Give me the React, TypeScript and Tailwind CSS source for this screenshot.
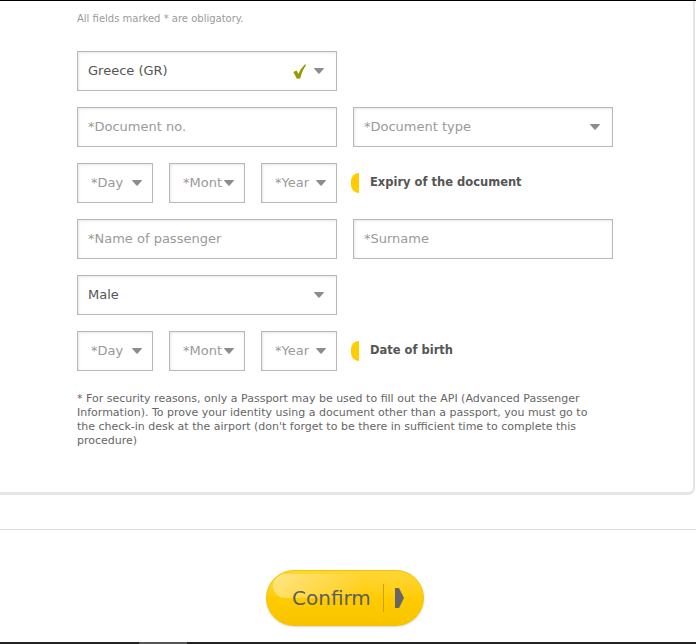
import React from 'react'

const font = { fontFamily: '"DejaVu Sans", Verdana, sans-serif' }

function Caret() {
  return (
    <svg width="10" height="6" viewBox="0 0 10 6" className="shrink-0">
      <path d="M0 0.5 Q0 0 0.8 0 L9.2 0 Q10 0 10 0.5 L5.6 5.6 Q5 6 4.4 5.6 Z" fill="#8c8c8c" />
    </svg>
  )
}

function Check() {
  return (
    <svg width="13" height="15" viewBox="0 0 13 15" className="shrink-0">
      <path d="M0.3 8 L3.6 6.6 L5.4 10 Q7.6 4.2 12.3 0 L12.9 1.4 Q9.4 5.8 7.2 14.4 L3.9 14.8 Z" fill="#999900" />
    </svg>
  )
}

function Marker() {
  return <span className="block w-[8px] h-[20px] rounded-l-full bg-[#ffcc00] shrink-0" />
}

const box =
  'h-[40px] border border-[#b8b8b8] bg-white shadow-[inset_1px_1px_3px_rgba(0,0,0,0.10)] flex items-center text-[13px] overflow-hidden'

function Field({ text, placeholder, select, check, w = 'w-[260px]' }: { text: string; placeholder?: boolean; select?: boolean; check?: boolean; w?: string }) {
  return (
    <div className={`${box} ${w} pl-[10px] pr-[12px]`}>
      <span className={`flex-1 truncate ${placeholder ? 'text-[#9a9a9a]' : 'text-[#555]'}`}>{text}</span>
      {check && <span className="mr-[8px] flex"><Check /></span>}
      {select && <Caret />}
    </div>
  )
}

function Small({ text, pl }: { text: string; pl: string }) {
  return (
    <div className={`${box} w-[76px] ${pl} pr-[10px]`}>
      <span className="flex-1 whitespace-nowrap overflow-hidden text-[#9a9a9a]">{text}</span>
      <Caret />
    </div>
  )
}

function DateRow({ label }: { label: string }) {
  return (
    <div className="flex items-center">
      <div className="flex gap-[16px]">
        <Small text="*Day" pl="pl-[13px]" />
        <Small text="*Mont" pl="pl-[13px]" />
        <Small text="*Year" pl="pl-[13px]" />
      </div>
      <div className="ml-[14px] flex items-center gap-[11px]">
        <Marker />
        <span className="text-[11.5px] font-bold text-[#555]">{label}</span>
      </div>
    </div>
  )
}

export default function App() {
  return (
    <div className="w-[696px] h-[644px] bg-white overflow-hidden flex flex-col" style={font}>
      <div className="h-px bg-black shrink-0" />

      {/* card */}
      <div className="-ml-[8px] mr-px h-[494px] shrink-0 bg-white border-r-2 border-b-[3px] border-[#e6e6e6] rounded-b-[7px] pl-[85px]">
        <p className="mt-[11px] text-[10px] leading-[14px] text-[#9a9a9a]">All fields marked * are obligatory.</p>

        <div className="mt-[25px] flex flex-col gap-[16px]">
          <Field text="Greece (GR)" select check />
          <div className="flex gap-[16px]">
            <Field text="*Document no." placeholder />
            <Field text="*Document type" placeholder select />
          </div>
          <DateRow label="Expiry of the document" />
          <div className="flex gap-[16px]">
            <Field text="*Name of passenger" placeholder />
            <Field text="*Surname" placeholder />
          </div>
          <Field text="Male" select />
          <DateRow label="Date of birth" />
        </div>

        <p className="mt-[21px] w-[522px] text-[11px] leading-[14px] text-[#666]">
          * For security reasons, only a Passport may be used to fill out the API (Advanced Passenger Information). To prove your identity using a document other than a passport, you must go to the check-in desk at the airport (don't forget to be there in sufficient time to complete this procedure)
        </p>
      </div>

      <div className="mt-[34px] h-px bg-[#dcdcdc] shrink-0" />

      <div className="mt-[40px] pl-[266px] shrink-0">
        <button className="relative w-[158px] h-[56px] rounded-full border border-[#f2c200] bg-gradient-to-b from-[#ffd633] via-[#ffcc00] to-[#f7c400] shadow-[0_1px_2px_rgba(0,0,0,0.15)] flex items-center overflow-hidden">
          <span className="absolute left-[6px] top-[3px] w-[90px] h-[24px] rounded-full bg-gradient-to-r from-white/40 to-white/0" />
          <span className="relative ml-[25px] text-[20px] text-[#5e5e5e]">Confirm</span>
          <span className="relative ml-[12px] w-px h-[28px] bg-[#c9a200]" />
          <svg className="relative ml-[11px]" width="9" height="20" viewBox="0 0 9 20">
            <path d="M0 0 L4 0 L9 10 L4 20 L0 20 Z" fill="#666" />
          </svg>
        </button>
      </div>

      <div className="mt-auto h-[2px] bg-[#222] shrink-0 relative">
        <span className="absolute left-[139px] w-[48px] h-full bg-[#555]" />
      </div>
    </div>
  )
}
